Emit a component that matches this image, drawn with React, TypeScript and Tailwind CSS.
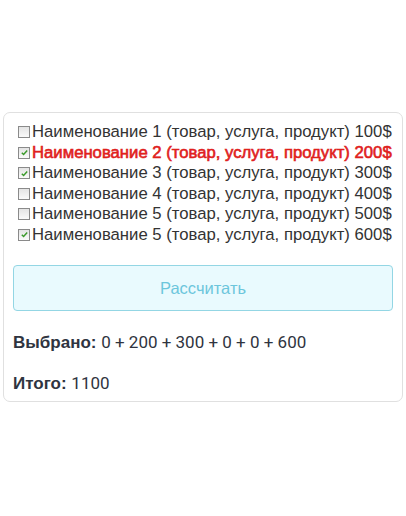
import React from 'react';

const items = [
  { name: 'Наименование 1 (товар, услуга, продукт)', price: 100, checked: false },
  { name: 'Наименование 2 (товар, услуга, продукт)', price: 200, checked: true, active: true },
  { name: 'Наименование 3 (товар, услуга, продукт)', price: 300, checked: true },
  { name: 'Наименование 4 (товар, услуга, продукт)', price: 400, checked: false },
  { name: 'Наименование 5 (товар, услуга, продукт)', price: 500, checked: false },
  { name: 'Наименование 5 (товар, услуга, продукт)', price: 600, checked: true },
];

function Box({ checked }: { checked: boolean }) {
  return (
    <span className="mr-[2px] inline-flex h-[12px] w-[12px] shrink-0 items-center justify-center border border-[#8a8a8a] bg-gradient-to-b from-[#e4e4e4] to-[#fafafa]">
      {checked && (
        <svg viewBox="0 0 10 10" className="h-[9px] w-[9px]">
          <path d="M2 5.2 L4 7.2 L8 2.8" fill="none" stroke="#3a9a2a" strokeWidth="1.6" />
        </svg>
      )}
    </span>
  );
}

export default function App() {
  const picked = items.map((i) => (i.checked ? i.price : 0));
  const total = picked.reduce((a, b) => a + b, 0);

  return (
    <div className="min-h-[516px] bg-white pt-[112px] px-[3px] font-['Liberation_Sans',Arial,sans-serif]">
      <div className="w-[400px] rounded-[7px] border border-[#e0e0e0] px-[9px] pt-[9px] pb-[7px]">
        <div className="pl-[5px] text-[16.7px] leading-[20.5px] text-[#333]">
          {items.map((item, i) => (
            <div
              key={i}
              className={`flex items-center whitespace-nowrap ${item.active ? 'text-[#e0201c] [-webkit-text-stroke:0.6px_#e0201c]' : ''}`}
            >
              <Box checked={item.checked} />
              <span>
                {item.name} {item.price}$
              </span>
            </div>
          ))}
        </div>

        <button className="mt-[20px] h-[46px] w-full rounded-[4px] border border-[#93d6e4] bg-[#e9fafe] text-[16.5px] text-[#6cc6dc]">
          Рассчитать
        </button>

        <div className="mt-[21px] text-[17px] leading-[20px] text-[#2f3440]">
          <p>
            <b>Выбрано:</b> <span className="font-['Roboto',sans-serif]">{picked.join(' + ')}</span>
          </p>
          <p className="mt-[20px]">
            <b>Итого:</b> <span className="font-['Roboto',sans-serif]">{total}</span>
          </p>
        </div>
      </div>
    </div>
  );
}
